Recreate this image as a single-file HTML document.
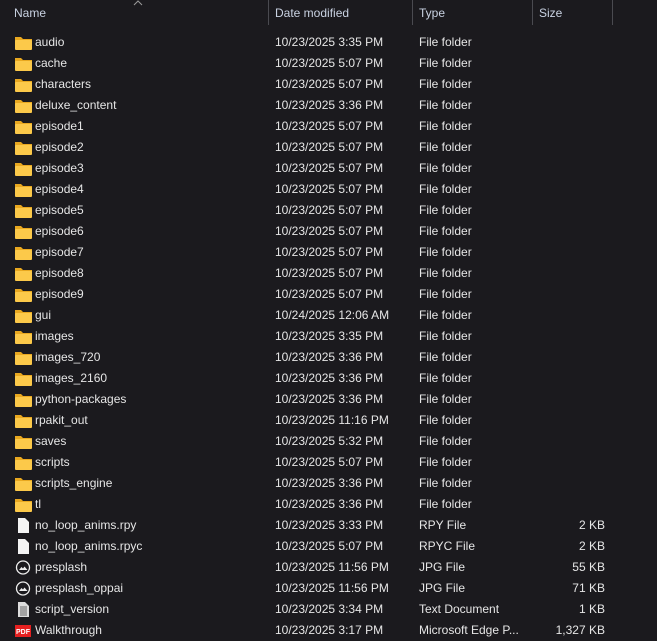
<!DOCTYPE html>
<html><head><meta charset="utf-8"><style>
body{margin:0;width:657px;height:638px;background:#1b1a1e;font-family:"Liberation Sans",sans-serif;font-size:12px;color:#e6e6e6;overflow:hidden;position:relative}
.hd{position:absolute;top:6px;color:#c9d2e2}
.sep{position:absolute;top:0;width:1px;height:25px;background:#4a4a50}
.r{position:absolute;left:0;width:657px;height:21px;line-height:21px}
.r span{position:absolute;white-space:nowrap}
.n{left:35px}.d{left:275px}.t{left:419px}.s{right:52px}
.ic{position:absolute;left:15px;top:3px}
</style></head><body>
<div class="hd" style="left:14px">Name</div>
<svg style="position:absolute;left:133px;top:0" width="10" height="6" viewBox="0 0 10 6"><path d="M1 5L5 1L9 5" fill="none" stroke="#9a9a9a" stroke-width="1"/></svg>
<div class="sep" style="left:268px"></div>
<div class="hd" style="left:275px">Date modified</div>
<div class="sep" style="left:412px"></div>
<div class="hd" style="left:419px">Type</div>
<div class="sep" style="left:532px"></div>
<div class="hd" style="left:539px">Size</div>
<div class="sep" style="left:612px"></div>
<div id="rows"></div>
<script>
var F='<svg class="ic" width="17" height="15" viewBox="0 0 17 15"><path d="M0 2h6l2 2h9v2H0z" fill="#e9a820"/><rect x="0" y="5" width="17" height="10" rx="1" fill="#fcc94a"/></svg>';
var D='<svg class="ic" width="17" height="15" viewBox="0 0 17 15"><path d="M3 0h7l4 4v11H3z" fill="#f4f4f4"/></svg>';
var I='<svg class="ic" width="17" height="15" viewBox="0 0 17 15"><circle cx="8" cy="7.5" r="6.5" fill="#1b1a1e" stroke="#eee" stroke-width="1.3"/><path d="M4 10l2.5-3 1.5 1.5 1.5-2 3 3.5z" fill="#eee"/></svg>';
var T='<svg class="ic" width="17" height="15" viewBox="0 0 17 15"><path d="M3 0h7l4 4v11H3z" fill="#ddd"/><path d="M5 5h7M5 7h7M5 9h7M5 11h7M5 13h7" stroke="#666" stroke-width=".9"/></svg>';
var P='<svg class="ic" width="17" height="15" viewBox="0 0 17 15"><rect x="0" y="2" width="16" height="12" fill="#e52020"/><text x="1" y="11" font-size="7" fill="#fff" font-family="Liberation Sans" font-weight="bold">PDF</text></svg>';
var rows=[["audio","10/23/2025 3:35 PM"],["cache","10/23/2025 5:07 PM"],["characters","10/23/2025 5:07 PM"],["deluxe_content","10/23/2025 3:36 PM"],["episode1","10/23/2025 5:07 PM"],["episode2","10/23/2025 5:07 PM"],["episode3","10/23/2025 5:07 PM"],["episode4","10/23/2025 5:07 PM"],["episode5","10/23/2025 5:07 PM"],["episode6","10/23/2025 5:07 PM"],["episode7","10/23/2025 5:07 PM"],["episode8","10/23/2025 5:07 PM"],["episode9","10/23/2025 5:07 PM"],["gui","10/24/2025 12:06 AM"],["images","10/23/2025 3:35 PM"],["images_720","10/23/2025 3:36 PM"],["images_2160","10/23/2025 3:36 PM"],["python-packages","10/23/2025 3:36 PM"],["rpakit_out","10/23/2025 11:16 PM"],["saves","10/23/2025 5:32 PM"],["scripts","10/23/2025 5:07 PM"],["scripts_engine","10/23/2025 3:36 PM"],["tl","10/23/2025 3:36 PM"]].map(function(x){return [F,x[0],x[1],"File folder",""]});
rows=rows.concat([[D,"no_loop_anims.rpy","10/23/2025 3:33 PM","RPY File","2 KB"],[D,"no_loop_anims.rpyc","10/23/2025 5:07 PM","RPYC File","2 KB"],[I,"presplash","10/23/2025 11:56 PM","JPG File","55 KB"],[I,"presplash_oppai","10/23/2025 11:56 PM","JPG File","71 KB"],[T,"script_version","10/23/2025 3:34 PM","Text Document","1 KB"],[P,"Walkthrough","10/23/2025 3:17 PM","Microsoft Edge P...","1,327 KB"]]);
var h='';rows.forEach(function(r,i){h+='<div class="r" style="top:'+(32+i*21)+'px">'+r[0]+'<span class="n">'+r[1]+'</span><span class="d">'+r[2]+'</span><span class="t">'+r[3]+'</span><span class="s">'+r[4]+'</span></div>'});
document.getElementById('rows').innerHTML=h;
</script>
</body></html>
